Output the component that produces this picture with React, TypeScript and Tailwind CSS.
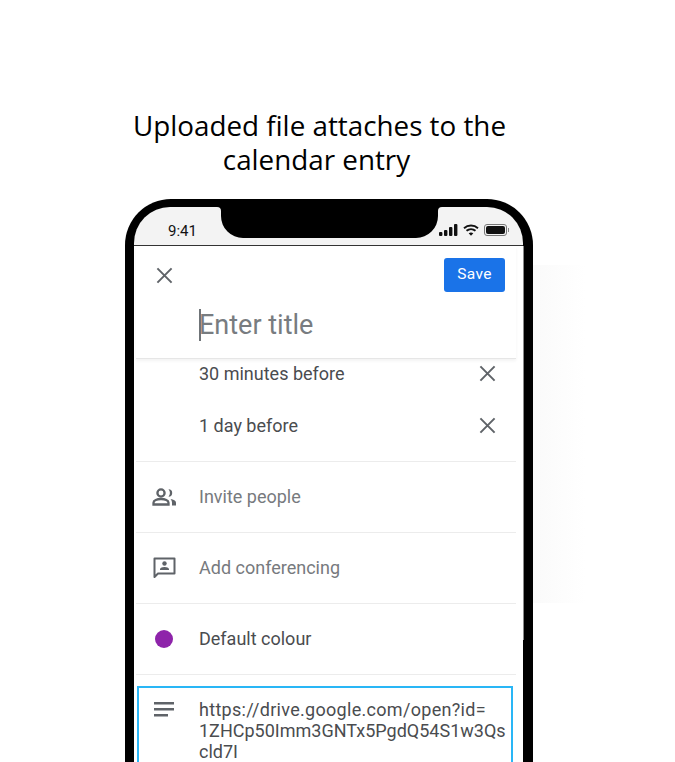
const bodyFont = "font-['Roboto',sans-serif]"

function CloseIcon({ className }: { className: string }) {
  return (
    <svg viewBox="0 0 18 18" className={className} fill="none" stroke="#5f6368" strokeWidth="2.1">
      <path d="M1.5 1.5 16.5 16.5M16.5 1.5 1.5 16.5" />
    </svg>
  )
}

function StatusIcons() {
  return (
    <div className="flex items-center gap-[5px] mb-[1px]">
      <svg width="19" height="12" viewBox="0 0 19 12" fill="#111">
        <rect x="0" y="8" width="3.400" height="4" rx="1" />
        <rect x="5" y="6" width="3.400" height="6" rx="1" />
        <rect x="10" y="3" width="3.400" height="9" rx="1" />
        <rect x="15" y="0" width="3.400" height="12" rx="1" />
      </svg>
      <svg width="16" height="12" viewBox="0 0 16 12" fill="none" stroke="#111" strokeWidth="1.9">
        <path d="M1 4.2C5 .6 11 .6 15 4.2M3.5 6.8c2.6-2.2 6.4-2.2 9 0" />
        <path d="M8 11.8 5.7 9.2c1.3-1 3.3-1 4.6 0z" fill="#111" stroke="none" />
      </svg>
      <div className="flex items-center gap-px">
        <div className="w-[23px] h-[12px] rounded-[3px] border border-[#777] p-px">
          <div className="w-full h-full rounded-[2px] bg-[#111]" />
        </div>
        <div className="w-px h-[4px] bg-[#888]" />
      </div>
    </div>
  )
}

function Row({ icon, label, muted }: { icon: React.ReactNode; label: string; muted?: boolean }) {
  return (
    <div className="h-[71px] flex items-center border-b border-[#ececec]">
      <div className="w-[56px] mr-[7px] flex justify-center shrink-0">{icon}</div>
      <span className={`text-[18px] mb-[2px] ${muted ? "text-[#777a7e]" : "text-[#4a4c4f]"}`}>{label}</span>
    </div>
  )
}

function Reminder({ label }: { label: string }) {
  return (
    <div className="h-[22px] flex items-center justify-between pl-[63px] pr-[20px]">
      <span className="text-[18px] text-[#4a4c4f]">{label}</span>
      <CloseIcon className="w-[17px] h-[17px]" />
    </div>
  )
}

export default function App() {
  return (
    <div className="relative h-[762px] w-[675px] overflow-hidden bg-white">
      {/* faint shadow right of the phone */}
      <div className="absolute left-[533px] top-[265px] w-[52px] h-[338px] bg-gradient-to-r from-[#fafafa] to-white" />

      <h1 className="pt-[108px] w-[639px] text-center text-[27.8px] leading-[34px] text-black font-['Open_Sans',sans-serif]">
        Uploaded file attaches to the
        <br />
        <span className="mr-[6px]">calendar entry</span>
      </h1>

      {/* Phone */}
      <div className={`relative mt-[23px] ml-[125px] w-[408px] h-[700px] bg-black rounded-t-[46px] pt-[8px] px-[9px] ${bodyFont}`}>
        {/* Notch */}
        <svg className="absolute left-[89px] top-0" width="231" height="39" viewBox="0 0 231 39" fill="#000">
          <path d="M0 0H231V8H228Q224 8 224 12V17A22 22 0 0 1 202 39H29A22 22 0 0 1 7 17V12Q7 8 3 8H0Z" />
        </svg>
        {/* Thin grey edge beside the screen */}
        <div className="absolute left-[398px] top-[47px] w-px h-[394px] bg-[#8a8a8a]" />

        <div className="h-[38px] mr-px bg-[#f3f3f3] rounded-t-[36px] flex items-end justify-between pl-[34px] pr-[14px] pb-[8px]">
          <span className="text-[15px] leading-[16px] text-[#111] mb-[-2px]">9:41</span>
          <StatusIcons />
        </div>

        <div className="bg-white border-t border-[#333] h-[660px] mr-px pl-[2px] pr-[7px]">
          {/* Header */}
          <div className="h-[113px] border-b border-[#e6e6e6] shadow-[0_2px_3px_rgba(0,0,0,0.05)]">
            <div className="flex items-center justify-between pl-[20px] pr-[11px] pt-[12px]">
              <CloseIcon className="w-[17px] h-[17px]" />
              <button className="w-[61px] h-[34px] rounded-[3px] bg-[#1a73e8] text-white text-[15.5px] tracking-[0.3px]">
                Save
              </button>
            </div>
            <div className="flex items-center pl-[63px] mt-[17px]">
              <div className="w-[2px] h-[32px] bg-[#6f7478] mr-[-2px]" />
              <span className="text-[27px] leading-[32px] text-[#787c80]">Enter title</span>
            </div>
          </div>

          {/* Reminders */}
          <div className="flex flex-col gap-[30px] border-b border-[#ececec] pt-[3px] pb-[25px]">
            <Reminder label="30 minutes before" />
            <Reminder label="1 day before" />
          </div>

          <Row
            muted
            label="Invite people"
            icon={
              <svg width="25" height="18" viewBox="0 0 25 18" fill="none" stroke="#5f6368" strokeWidth="2.300">
                <circle cx="9" cy="5" r="3.600" />
                <path d="M1.500 16.500v-1.800C1.500 12.400 5 11 9 11s7.500 1.400 7.500 3.700v1.800z" />
                <path d="M16.500 1.300a3.700 3.700 0 0 1 0 7.400 6 6 0 0 0 0-7.400zM18.500 11c3 .5 5.500 1.700 5.500 3.700v2.800h-4v-2.800c0-1.500-.6-2.700-1.500-3.700z" fill="#5f6368" stroke="none" />
              </svg>
            }
          />
          <Row
            muted
            label="Add conferencing"
            icon={
              <svg width="23" height="22" viewBox="0 0 23 22" fill="none">
                <path d="M1.500 1.500h20v15H5l-3.500 3.500z" stroke="#5f6368" strokeWidth="2" strokeLinejoin="round" />
                <circle cx="11.500" cy="6.500" r="2.200" fill="#5f6368" />
                <path d="M7 13v-.8c0-1.500 3-2.200 4.500-2.200s4.500.7 4.500 2.200v.8z" fill="#5f6368" />
              </svg>
            }
          />
          <Row label="Default colour" icon={<div className="w-[18px] h-[18px] rounded-full bg-[#8e24aa]" />} />

          {/* Description */}
          <div className="mt-[11px] ml-[1px] mr-[3px] h-[200px] border-2 border-[#29b6f6] flex">
            <div className="w-[60px] pt-[14px] pl-[15px] shrink-0">
              <svg width="21" height="15" viewBox="0 0 21 15" fill="#5f6368">
                <rect x="0" y="0" width="20" height="2.500" />
                <rect x="0" y="6" width="20" height="2.500" />
                <rect x="0" y="12" width="14" height="2.500" />
              </svg>
            </div>
            <p className="pt-[11px] text-[18px] leading-[21px] text-[#4a4c4f] whitespace-nowrap">
              <span className="tracking-[0.3px]">https://drive.google.com/open?id=</span>
              <br />
              1ZHCp50Imm3GNTx5PgdQ54S1w3Qs
              <br />
              cld7I
            </p>
          </div>
        </div>
      </div>
    </div>
  )
}
